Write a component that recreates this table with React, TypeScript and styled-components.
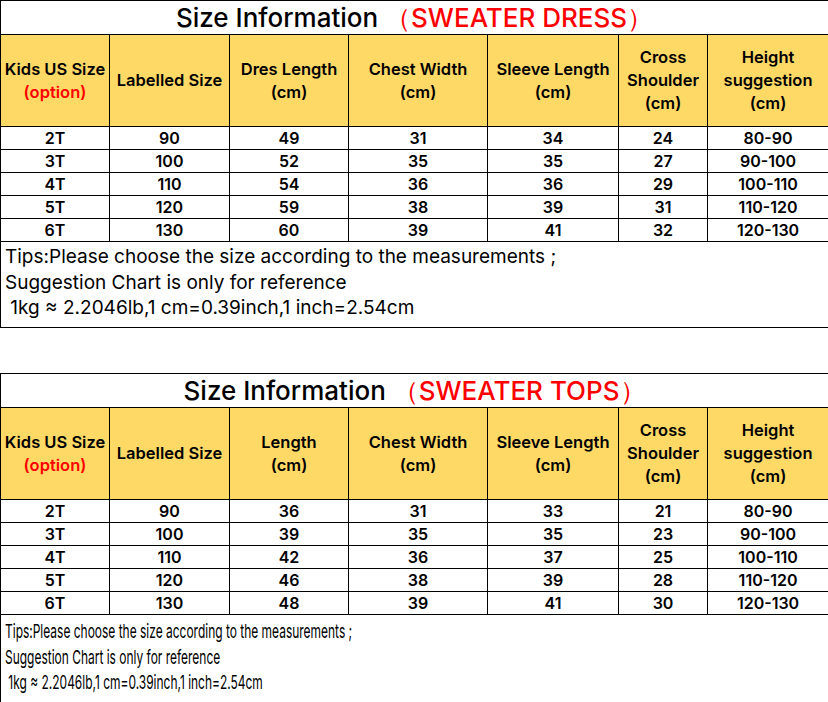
import React from "react";
import styled, { createGlobalStyle } from "styled-components";

const GlobalStyle = createGlobalStyle`
  html, body {
    margin: 0;
    padding: 0;
    background: #ffffff;
  }
  body {
    font-family: Inter, "Noto Sans", sans-serif;
    color: #000;
  }
`;

const Page = styled.main`
  width: 828px;
  display: flex;
  flex-direction: column;
  gap: 45px;
`;

const Table = styled.table`
  width: 828px;
  border-collapse: collapse;
  table-layout: fixed;
`;

const TitleCell = styled.td`
  height: 33px;
  padding: 0;
  border: 1px solid #000;
  text-align: center;
  font-size: 26px;
  font-weight: 500;
  line-height: 33px;
  white-space: nowrap;
`;

const Red = styled.span`
  color: #ff0000;
`;

const HeadCell = styled.th`
  height: 91px;
  padding: 0;
  border: 1px solid #000;
  background: #ffd966;
  font-size: 16.5px;
  font-weight: 600;
  line-height: 23px;
  text-align: center;
  vertical-align: middle;
  white-space: nowrap;
`;

const DataCell = styled.td`
  height: 22px;
  padding: 0;
  border: 1px solid #000;
  font-size: 16px;
  font-weight: 600;
  line-height: 22px;
  text-align: center;
  white-space: nowrap;
`;

const TipsCell = styled.td<{ $tall?: boolean }>`
  height: ${(p) => (p.$tall ? 87 : 83)}px;
  padding: ${(p) => (p.$tall ? "4px 0 0 4px" : "2px 0 0 4px")};
  border: 1px solid #000;
  vertical-align: top;
`;

const Tips = styled.div<{ $condensed?: boolean }>`
  font-size: 19px;
  font-weight: 400;
  line-height: 25.5px;
  white-space: pre;
  transform: ${(p) => (p.$condensed ? "scaleX(0.63)" : "none")};
  transform-origin: left top;
`;

type Chart = {
  kind: string;
  length: string;
  rows: string[][];
  condensed?: boolean;
};

const charts: Chart[] = [
  {
    kind: "SWEATER DRESS",
    length: "Dres Length",
    rows: [
      ["2T", "90", "49", "31", "34", "24", "80-90"],
      ["3T", "100", "52", "35", "35", "27", "90-100"],
      ["4T", "110", "54", "36", "36", "29", "100-110"],
      ["5T", "120", "59", "38", "39", "31", "110-120"],
      ["6T", "130", "60", "39", "41", "32", "120-130"],
    ],
  },
  {
    kind: "SWEATER TOPS",
    length: "Length",
    condensed: true,
    rows: [
      ["2T", "90", "36", "31", "33", "21", "80-90"],
      ["3T", "100", "39", "35", "35", "23", "90-100"],
      ["4T", "110", "42", "36", "37", "25", "100-110"],
      ["5T", "120", "46", "38", "39", "28", "110-120"],
      ["6T", "130", "48", "39", "41", "30", "120-130"],
    ],
  },
];

const widths = [109, 120, 119, 139, 131, 89, 121];

function SizeChart({ chart }: { chart: Chart }) {
  return (
    <Table>
      <colgroup>
        {widths.map((w, i) => (
          <col key={i} style={{ width: w }} />
        ))}
      </colgroup>
      <tbody>
        <tr>
          <TitleCell colSpan={7}>
            Size Information <Red>（{chart.kind}）</Red>
          </TitleCell>
        </tr>
        <tr>
          <HeadCell>
            Kids US Size
            <br />
            <Red>(option)</Red>
          </HeadCell>
          <HeadCell>Labelled Size</HeadCell>
          <HeadCell>
            {chart.length}
            <br />
            (cm)
          </HeadCell>
          <HeadCell>
            Chest Width
            <br />
            (cm)
          </HeadCell>
          <HeadCell>
            Sleeve Length
            <br />
            (cm)
          </HeadCell>
          <HeadCell>
            Cross
            <br />
            Shoulder
            <br />
            (cm)
          </HeadCell>
          <HeadCell>
            Height
            <br />
            suggestion
            <br />
            (cm)
          </HeadCell>
        </tr>
        {chart.rows.map((row) => (
          <tr key={row[0]}>
            {row.map((v, i) => (
              <DataCell key={i}>{v}</DataCell>
            ))}
          </tr>
        ))}
        <tr>
          <TipsCell colSpan={7} $tall={chart.condensed}>
            <Tips $condensed={chart.condensed}>
              {"Tips:Please choose the size according to the measurements ;\nSuggestion Chart is only for reference\n 1kg ≈ 2.2046lb,1 cm=0.39inch,1 inch=2.54cm"}
            </Tips>
          </TipsCell>
        </tr>
      </tbody>
    </Table>
  );
}

export default function App() {
  return (
    <>
      <GlobalStyle />
      <Page>
        {charts.map((c) => (
          <SizeChart key={c.kind} chart={c} />
        ))}
      </Page>
    </>
  );
}
